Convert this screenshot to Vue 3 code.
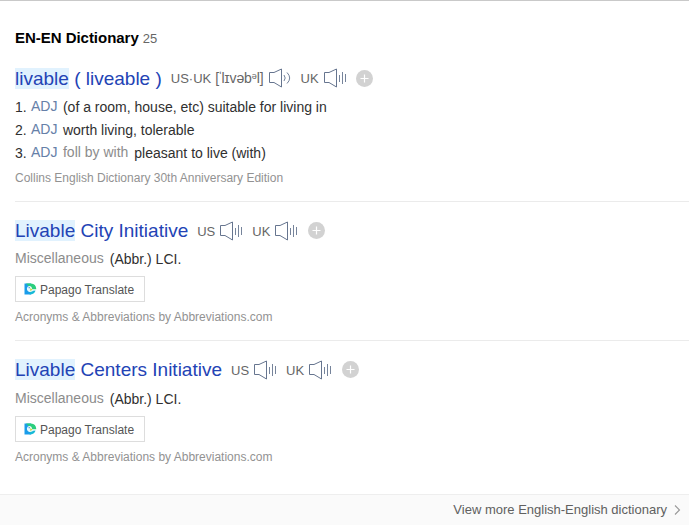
<script setup>
const entries = [
  {
    kind: 'collins',
    mark: 'livable',
    rest: ' ( liveable )',
    first: 'US·UK',
    ipa: true,
    wave: true,
    senses: [
      { pos: 'ADJ', text: '(of a room, house, etc) suitable for living in' },
      { pos: 'ADJ', text: 'worth living, tolerable' },
      { pos: 'ADJ', note: 'foll by with', text: 'pleasant to live (with)' },
    ],
    source: 'Collins English Dictionary 30th Anniversary Edition',
  },
  {
    kind: 'city',
    mark: 'Livable',
    rest: ' City Initiative',
    first: 'US',
    abbr: '(Abbr.) LCI.',
    source: 'Acronyms & Abbreviations by Abbreviations.com',
  },
  {
    kind: 'centers',
    mark: 'Livable',
    rest: ' Centers Initiative',
    first: 'US',
    abbr: '(Abbr.) LCI.',
    source: 'Acronyms & Abbreviations by Abbreviations.com',
  },
]
</script>

<template>
  <main class="page">
    <h3 class="heading">EN-EN Dictionary <span class="count">25</span></h3>

    <section v-for="e in entries" :key="e.kind" class="entry" :class="e.kind">
      <div class="head">
        <a class="word"><mark>{{ e.mark }}</mark>{{ e.rest }}</a>
        <span class="region">{{ e.first }}</span>
        <span v-if="e.ipa" class="ipa">[<span class="tick">ˈ</span>lɪvəb<span class="sup">ə</span>l]</span>
        <svg class="speaker" width="24" height="20" viewBox="0 0 24 20" fill="none">
          <path d="M1.5 4.5H6L13.5 1V19L6 14.5H1.5Z" stroke="#66758f" />
          <path v-if="e.wave" d="M16 7Q18.4 10 16 13M19 4.5Q24.4 10 19 15.5" stroke="#73829a" />
          <path v-else d="M16.5 7V14M19.5 4V16M22.5 6V14" stroke="#76849b" />
        </svg>
        <span class="region uk">UK</span>
        <svg class="speaker" width="24" height="20" viewBox="0 0 24 20" fill="none">
          <path d="M1.5 4.5H6L13.5 1V19L6 14.5H1.5Z" stroke="#66758f" />
          <path d="M16.5 7V14M19.5 4V16M22.5 6V14" stroke="#76849b" />
        </svg>
        <svg class="add" width="17" height="17" viewBox="0 0 17 17">
          <circle cx="8.5" cy="8.5" r="8.5" fill="#d2d2d2" />
          <path d="M8.5 4.5V12.5M4.5 8.5H12.5" stroke="#fff" stroke-width="1.2" />
        </svg>
      </div>

      <ol v-if="e.senses" class="senses">
        <li v-for="(s, i) in e.senses" :key="i">
          <span class="num">{{ i + 1 }}.</span>
          <span class="pos">{{ s.pos }}</span>
          <span v-if="s.note" class="note">{{ s.note }}</span>
          <span class="def">{{ s.text }}</span>
        </li>
      </ol>

      <template v-else>
        <div class="misc"><span class="note">Miscellaneous</span><span class="def">{{ e.abbr }}</span></div>
        <button class="papago">
          <svg width="13" height="12" viewBox="0 0 13 12">
            <path d="M0.5 0.5H7V11.5H0.5Z" fill="#1a9cea" />
            <path d="M2 0.5H7Q12 0.8 12.3 6.3H8Z" fill="#2bce7c" />
            <path d="M6 8L11.5 7.5Q10.5 11.5 5.5 11.5Z" fill="#16b9d6" />
            <path d="M2.9 5.5Q3 3 5.3 3Q7.8 3 8.2 6L9.3 7.8Q8 9.2 5.5 8.9Q2.9 8.4 2.9 5.5Z" fill="#e9f8fb" />
            <path d="M6 5.2L8.6 6.2L6.4 8.2Z" fill="#c6d943" />
            <circle cx="5.2" cy="4.7" r=".6" fill="#267fc2" />
          </svg>
          <span class="label">Papago Translate</span>
        </button>
      </template>

      <p class="source">{{ e.source }}</p>
    </section>

    <footer class="more">
      <span>View more English-English dictionary</span>
      <svg width="7" height="12" viewBox="0 0 7 12" fill="none">
        <path d="M1 1.5L5.5 6L1 10.5" stroke="#999" stroke-width="1.1" />
      </svg>
    </footer>
  </main>
</template>

<style>
body { margin: 0; background: #fff; }
</style>

<style scoped>
.page {
  box-sizing: border-box;
  width: 689px;
  height: 525px;
  overflow: hidden;
  display: flex;
  flex-direction: column;
  border-top: 1px solid #c9c9c9;
  font-family: "Liberation Sans", Arial, sans-serif;
  font-size: 14px;
  color: #303030;
  white-space: nowrap;
}
.heading {
  margin: 27px 0 0 15px;
  font-size: 15px;
  line-height: 20px;
  height: 20px;
  letter-spacing: -0.03px;
  color: #000;
}
.count { font-size: 13px; font-weight: 400; color: #666; }
.entry {
  box-sizing: border-box;
  margin-left: 15px;
  height: 139px;
  padding-top: 17px;
  border-bottom: 1px solid #ebebeb;
}
.entry.collins { height: 154px; padding-top: 18px; }
.entry.centers { border-bottom: 0; height: 153px; }
.head { display: flex; align-items: center; height: 24px; }
.word { color: #2343b5; font-size: 19px; line-height: 24px; white-space: pre; }
.word mark { background: #e1f2fe; color: inherit; display: inline-block; height: 21px; line-height: 21px; }
.collins .word { position: relative; top: 1px; }
.region { margin-left: 9px; color: #666; font-size: 13px; }
.ipa { margin-left: 4px; color: #666; font-size: 14px; letter-spacing: -0.1px; }
.sup { font-size: 9px; position: relative; top: -4px; }
.tick { position: relative; top: -1px; margin: 0 -1px; }
.speaker { margin-left: 4px; flex: none; }
.add { margin-left: 9.6px; margin-bottom: 1px; flex: none; }
.collins .add { margin-left: 9px; margin-bottom: 0; }
.senses { list-style: none; margin: 6px 0 0; padding: 0; }
.senses li { display: flex; height: 23px; line-height: 23px; }
.num { width: 16px; }
.pos { color: #6680a8; margin: -1px 5.5px 0 0; }
.note { color: #8c8c8c; margin: -1px 6px 0 0; }
.misc { display: flex; height: 23px; line-height: 23px; margin-top: 6px; }
.city .misc { margin-top: 5px; }
.papago {
  display: flex;
  align-items: center;
  gap: 3px;
  box-sizing: border-box;
  width: 130px;
  height: 26px;
  margin: 5px 0 0;
  padding: 0 0 0 8px;
  border: 1px solid #ddd;
  background: #fff;
  color: #555;
  font: 12px "Liberation Sans", Arial, sans-serif;
}
.label { padding-top: 1px; }
.source { margin: 6px 0 0; font-size: 12px; line-height: 18px; color: #929292; }
.collins .source { margin-top: 4px; }
.more {
  flex: 1;
  display: flex;
  justify-content: flex-end;
  align-items: center;
  gap: 7px;
  padding: 0 8px 1px 0;
  border-top: 1px solid #eee;
  background: #fafafa;
  color: #606060;
  font-size: 13px;
}
</style>
